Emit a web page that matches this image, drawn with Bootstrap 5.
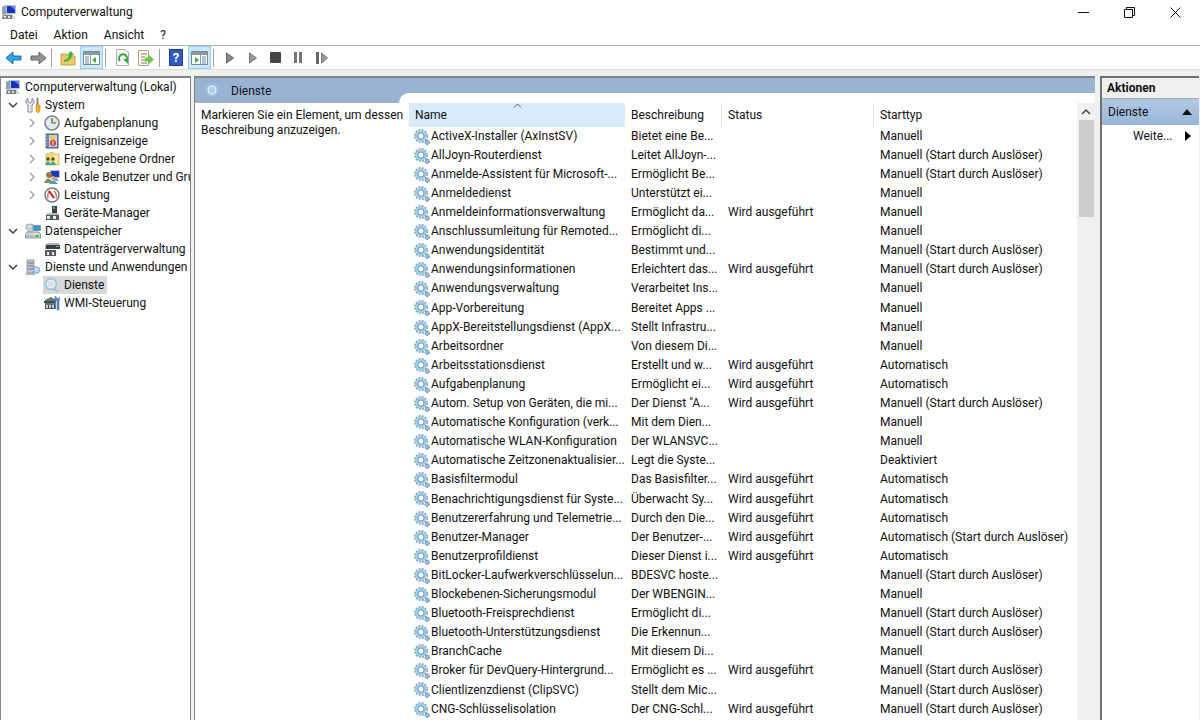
<!DOCTYPE html>
<html lang="de">
<head>
<meta charset="utf-8">
<meta name="viewport" content="width=device-width, initial-scale=1">
<title>Computerverwaltung</title>
<link href="https://cdn.jsdelivr.net/npm/bootstrap@5.3.0/dist/css/bootstrap.min.css" rel="stylesheet">
<style>
  body { font: 12px/18px Roboto, "Open Sans", sans-serif; color: #111; background: #f0f0f0; }
  svg { display: block; flex: none; }
  button { font: inherit; color: inherit; }
  .plain { border: 0; background: none; padding: 0; }
  .titlebar { height: 24px; padding: 0 2px 0 1px; }
  .winbtn { width: 46px; height: 24px; }
  .menubar { height: 21px; padding-left: 2px; border-bottom: 1px solid #b4b4b4; box-sizing: content-box; }
  .toolbar { height: 24px; border-bottom: 1px solid #dcdcdc; padding-left: 2px; gap: 1px; }
  .tool { width: 23px; height: 23px; display: flex; align-items: center; justify-content: center; }
  .tool.on { background: #cce8ff; border: 1px solid #99cdf5; }
  .rule { width: 1px; height: 18px; background: #a0a0a0; margin: 0 3px 0 1px; }
  .panes { padding-top: 6px; }
  .pane { background: #fff; border: solid #828282; border-width: 2px 1px 0; min-width: 0; overflow: hidden; }
  .tree-pane { width: 191px; margin-right: 3px; }
  .tree li { white-space: nowrap; height: 18px; display: flex; align-items: center; }
  .tree li > span { flex: none; }
  .tree .twist { width: 13px; margin-right: 6px; height: 18px; display: flex; align-items: center; justify-content: center; }
  .tree .lvl1 { padding-left: 5px; }
  .tree .lvl2 { padding-left: 24px; }
  .tree svg.ico { margin-right: 4px; }
  .tree .chosen { background: #d9d9d9; padding-right: 3px; margin-left: -1px; padding-left: 1px; }
  .heading { background: #9ab3d3; height: 25px; }
  .heading-name { width: 204px; padding-left: 10px; gap: 10px; }
  .heading-cap { height: 10px; border-top-left-radius: 10px; background: #fff; }
  .hint { width: 214px; padding: 5px 0 0 6px; line-height: 15px; white-space: nowrap; }
  .svc { table-layout: fixed; width: 100%; border-collapse: separate; border-spacing: 0; }
  .svc th { height: 24px; padding: 0 0 0 6px; font-weight: 400; position: relative; border-right: 1px solid #e5e5e5; }
  .svc th:first-child { background: #d9ebf9; border-right: 0; }
  .svc th:last-child { border-right: 0; }
  .svc td { height: 19px; line-height: 19px; padding: 0 0 0 6px; white-space: nowrap; }
  .svc tr:nth-child(10n) td { height: 20px; }
  .svc td:first-child { padding-left: 4px; }
  .svc .sort { position: absolute; top: 0; left: 50%; margin-left: -4px; }
  .scrollbar { width: 18px; background: #f0f0f0; }
  .scrollbar button { width: 18px; height: 17px; display: flex; align-items: center; justify-content: center; }
  .thumb { height: 97px; margin: 0 1px 0 2px; background: #cdcdcd; }
  .action-pane { width: 99px; margin: 0 1px 0 5px; border-right: 0; border-left-width: 2px; border-color: #707070; }
  .action-title { height: 21px; background: #f0f0f0; border-bottom: 1px solid #a8a8a8; padding-left: 5px; font-size: 12px; line-height: 20px; }
  .action-group { height: 26px; background: linear-gradient(#b3c9e5, #98b4d6); padding: 0 7px 0 6px; }
  .action-more { height: 22px; padding: 0 8px 0 31px; }
</style>
</head>
<body class="vh-100 d-flex flex-column overflow-hidden">

<svg width="0" height="0" class="position-absolute" aria-hidden="true">
  <defs>
    <symbol id="computer" viewBox="0 0 16 16">
      <path d="M1 3l4-2v9l-4 1z" fill="#8fa0b4"/><path d="M5 1h10v9H5z" fill="#b9c6d6"/><path d="M6 2h8v7H6z" fill="#1732b8"/><path d="M9 2h5v4z" fill="#5b86ec"/>
      <path d="M9 10h3v2H9z" fill="#8190a4"/><path d="M2 10h10l3 5H1z" fill="#d6d9d4"/><path d="M2 11h9v4H1z" fill="#777d80"/><path d="M3 12h2v2H3zM7 12h2v2H7z" fill="#e3e6e6"/>
    </symbol>
    <symbol id="tools" viewBox="0 0 16 16">
      <path d="M3 1v4l2 1 2-1V1l2 2v3L7 8v7H3V8L1 6V3z" fill="#e9edf0" stroke="#83898f"/><path d="M12 1h1v7h-1z" fill="#777" stroke="#888"/><path d="M11 8h4v6l-2 2-2-2z" fill="#f1b72c" stroke="#c58a15" stroke-width=".7"/>
    </symbol>
    <symbol id="clock" viewBox="0 0 16 16">
      <circle cx="8" cy="8" r="7" fill="#e4e9ee" stroke="#7e858c" stroke-width="1.6"/><path d="M8 8V3a5 5 0 0 1 5 5z" fill="#f3dfaa"/><path d="M8 3v5h4" fill="none" stroke="#4b5c70" stroke-width="1.2"/>
    </symbol>
    <symbol id="log" viewBox="0 0 16 16">
      <path d="M2 1h12v14H2z" fill="#7289ad" stroke="#455a7d"/><path d="M5 2h8v12H5z" fill="#c7d3e4"/><circle cx="9" cy="5" r="2.4" fill="#f2cd43"/><circle cx="9" cy="10" r="3" fill="#d83d36"/><path d="M8.5 8h1v4h-1z" fill="#fff"/><path d="M1 3h2M1 6h2M1 9h2M1 12h2" stroke="#ddd"/>
    </symbol>
    <symbol id="shared" viewBox="0 0 16 16">
      <path d="M2 3l7-2 1 2h5v11H2z" fill="#f3d77e" stroke="#cda849" stroke-width=".7"/><path d="M10 4h4v9h-4z" fill="#f9e8ad"/><circle cx="4" cy="8" r="1.7" fill="#59432a"/><circle cx="9" cy="8" r="1.7" fill="#59432a"/><path d="M1 14q3-7 6 0M6 14q3-7 6 0" fill="#31aaa0"/>
    </symbol>
    <symbol id="users" viewBox="0 0 16 16">
      <path d="M6 1h10v8H6z" fill="#b8c5d5"/><path d="M7 2h8v6H7z" fill="#1a39ba"/><path d="M9 9h4l2 3H9z" fill="#9ba6b3"/><circle cx="5" cy="6" r="3" fill="#a57844"/><path d="M0 14q4-9 9 0z" fill="#6a9b70"/><circle cx="9" cy="9" r="2" fill="#d3ac7d"/><path d="M5 15q4-7 9 0z" fill="#5e95c1"/>
    </symbol>
    <symbol id="perf" viewBox="0 0 16 16">
      <circle cx="8" cy="8" r="7" fill="#fff" stroke="#7d7d7d" stroke-width="1.6"/><path d="M4 11q-1-5 2-7M10 4q3 2 2 7" fill="none" stroke="#cc5e5b" stroke-width="1.3"/><path d="M5 4l5 7" stroke="#c4161c" stroke-width="2"/>
    </symbol>
    <symbol id="device" viewBox="0 0 16 16">
      <path d="M8 1h5v7H8z" fill="#3a3f40"/><path d="M9 2h2v2H9z" fill="#5fbd65"/><path d="M3 8h11l1 3H2z" fill="#b5b8b8"/><path d="M2 10h13v5H2z" fill="#53585b"/><path d="M3 11h3v3H3zM9 11h3v3H9z" fill="#e9eded"/>
    </symbol>
    <symbol id="storage" viewBox="0 0 16 16">
      <path d="M1 2q4-2 8 0v4H1z" fill="#d5dadd" stroke="#868e92" stroke-width=".7"/><path d="M8 2.500h7.500v5H8z" fill="#25a0d8" stroke="#87939d"/><path d="M2 6h6v4H2z" fill="#c0d1dc"/><path d="M2 9h12l1.500 2v4H.5v-4z" fill="#d4d9db" stroke="#7e878b" stroke-width=".8"/><path d="M10 12h4v2h-4z" fill="#52b84f"/><path d="M1 13h8" stroke="#8c9599"/>
    </symbol>
    <symbol id="disk" viewBox="0 0 16 16">
      <path d="M3 2h12l1 3v3H1V5z" fill="#b2b7b9"/><path d="M2 4h14v4H2z" fill="#3a4041"/><path d="M12 5h3v1h-3z" fill="#65c669"/><path d="M1 9h11v6H1z" fill="#565c60"/><path d="M3 11h2v3H3zM8 11h2v3H8z" fill="#edf0f0"/>
    </symbol>
    <symbol id="server" viewBox="0 0 16 16">
      <path d="M2 1h7v13H2z" fill="#bdc8d0" stroke="#7d8a95" stroke-width=".8"/><path d="M3 4h5M3 7h5M3 10h5" stroke="#66747f"/><circle cx="11.500" cy="11" r="3" fill="#c7dff1" stroke="#6e9cbf" stroke-width="1.6" stroke-dasharray="1.5 .8"/><path d="M1 14h9v2H1z" fill="#a9b7c1"/>
    </symbol>
    <symbol id="gear" viewBox="0 0 16 16">
      <circle cx="7" cy="7" r="6" fill="none" stroke="#7da7c7" stroke-width="2" stroke-dasharray="1.9 1.240"/><circle cx="7" cy="7" r="4.400" fill="#fff" stroke="#a6cde8" stroke-width="2.400"/><circle cx="7" cy="7" r="3.100" fill="#f5fafd" stroke="#5886aa" stroke-width=".9"/><circle cx="13.200" cy="13.200" r="1.700" fill="#d4e7f4" stroke="#5f8fb4" stroke-width="2" stroke-dasharray="1.200 .6"/>
    </symbol>
    <symbol id="gear-soft" viewBox="0 0 16 16">
      <circle cx="7" cy="7" r="5.200" fill="#d8e8f4" fill-opacity=".5" stroke="#9cc6e2" stroke-width="2.200"/><circle cx="7" cy="7" r="4" fill="none" stroke="#eaf5fb"/><path d="M10.500 12.500l4 2" stroke="#84afd0" stroke-width="2.400" stroke-dasharray="1.500 1"/>
    </symbol>
    <symbol id="wmi" viewBox="0 0 16 16">
      <path d="M1 5l6-3 5 3v9H1z" fill="#68757e"/><path d="M0 6h11v2H0zM1 10h10v4H1z" fill="#3f4c57"/><path d="M2 10h2v3H2zM5 10h2v3H5zM8 10h2v3H8z" fill="#c9d2d8"/><path d="M11 1v4l2 1v9h2V6l1-4-2 2z" fill="#5d8fc5" stroke="#39668f" stroke-width=".5"/>
    </symbol>
    <symbol id="down" viewBox="0 0 10 10"><path d="M1 3l4 4 4-4" fill="none" stroke="#404040" stroke-width="1.500"/></symbol>
    <symbol id="right" viewBox="0 0 10 10"><path d="M3 1l4 4-4 4" fill="none" stroke="#a0a0a0" stroke-width="1.400"/></symbol>
  </defs>
</svg>

<header class="bg-white">
  <div class="titlebar d-flex align-items-center">
    <svg width="16" height="16"><use href="#computer"/></svg>
    <span class="ms-1 flex-grow-1">Computerverwaltung</span>
    <button class="winbtn plain d-flex align-items-center justify-content-center" aria-label="Minimieren"><svg width="11" height="11"><path d="M0 5.500h11" stroke="#111"/></svg></button>
    <button class="winbtn plain d-flex align-items-center justify-content-center" aria-label="Verkleinern"><svg width="11" height="11"><path d="M.5 2.500h8v8h-8zM2.500 2.500v-2h8v8h-2" fill="none" stroke="#111"/></svg></button>
    <button class="winbtn plain d-flex align-items-center justify-content-center" aria-label="Schließen"><svg width="11" height="11"><path d="M.5.5l10 10M10.500.5l-10 10" stroke="#111"/></svg></button>
  </div>
  <nav class="menubar d-flex align-items-center" aria-label="Menü">
    <button class="plain px-2">Datei</button>
    <button class="plain px-2">Aktion</button>
    <button class="plain px-2">Ansicht</button>
    <button class="plain px-2">?</button>
  </nav>
  <div class="toolbar d-flex align-items-center" role="toolbar" aria-label="Symbolleiste">
    <button class="tool plain" aria-label="Zurück"><svg width="18" height="16"><path d="M1 8l7-6v4h8v4H8v4z" fill="#2fa3e3" stroke="#1b74b0"/></svg></button>
    <button class="tool plain" aria-label="Vorwärts"><svg width="18" height="16"><path d="M17 8l-7-6v4H2v4h8v4z" fill="#949494" stroke="#666"/></svg></button>
    <span class="rule"></span>
    <button class="tool plain" aria-label="Eine Ebene nach oben"><svg width="16" height="16"><path d="M1 4h5l2 2h7v9H1z" fill="#edc86c" stroke="#c99f42"/><path d="M4 10q5-1 5-5H7l4-4 3 4h-2q0 6-8 7z" fill="#45b637"/></svg></button>
    <button class="tool on p-0" aria-label="Konsolenstruktur"><svg width="17" height="16"><path d="M.5 1.500h16v13H.5z" fill="#fff" stroke="#7c8792"/><path d="M1 2h15v3H1z" fill="#8b98a5"/><path d="M2 7h4M2 9h4M2 11h4M2 13h4" stroke="#6a88aa"/><path d="M7.500 5v9" stroke="#8b98a5"/><path d="M13 7v6l-4-3z" fill="#3cae36"/></svg></button>
    <span class="rule"></span>
    <button class="tool plain" aria-label="Aktualisieren"><svg width="16" height="17"><path d="M2.500.5h9l3 3v13h-12z" fill="#fff" stroke="#aaa"/><path d="M6 12a4 4 0 1 1 6 0" fill="none" stroke="#36aa31" stroke-width="2"/><path d="M9 10h5v5z" fill="#36aa31"/></svg></button>
    <button class="tool plain" aria-label="Liste exportieren"><svg width="17" height="16"><path d="M1.500.5h10v15h-10z" fill="#fffced" stroke="#aaa487"/><path d="M4 4h6M4 7h4M4 10h4M4 13h6" stroke="#777"/><path d="M8 7.500h4V5l5 4.500-5 4.500v-2.500H8z" fill="#60c93d"/></svg></button>
    <span class="rule"></span>
    <button class="tool plain" aria-label="Hilfe"><svg width="14" height="17"><path d="M.5.5h13v16H.5z" fill="#3359ba" stroke="#1f3c8d"/><text x="7" y="13" fill="#fff" font-size="13" font-weight="700" text-anchor="middle">?</text></svg></button>
    <button class="tool on p-0" aria-label="Aktionsbereich"><svg width="17" height="16"><path d="M.5 1.500h16v13H.5z" fill="#fff" stroke="#7c8792"/><path d="M1 2h15v3H1z" fill="#8b98a5"/><path d="M11 7h4M11 9h4M11 11h4M11 13h4" stroke="#6a88aa"/><path d="M9.500 5v9" stroke="#8b98a5"/><path d="M4 7v6l4-3z" fill="#3cae36"/></svg></button>
    <span class="rule"></span>
    <div class="d-flex">
      <button class="tool plain" aria-label="Starten"><svg width="8" height="12"><path d="M.5 1l7 5-7 5z" fill="#888" stroke="#666"/></svg></button>
      <button class="tool plain" aria-label="Fortsetzen"><svg width="8" height="12"><path d="M.5 1l7 5-7 5z" fill="#999" stroke="#777"/></svg></button>
      <button class="tool plain" aria-label="Beenden"><svg width="11" height="11"><rect width="11" height="11" rx="1" fill="#444"/></svg></button>
      <button class="tool plain" aria-label="Anhalten"><svg width="9" height="11"><path d="M0 0h3v11H0zM5 0h3v11H5z" fill="#777"/></svg></button>
      <button class="tool plain" aria-label="Neu starten"><svg width="12" height="12"><path d="M0 0h3v12H0z" fill="#666"/><path d="M5.500 1l6 5-6 5z" fill="#999" stroke="#777"/></svg></button>
    </div>
  </div>
</header>

<main class="panes d-flex flex-grow-1 overflow-hidden">
  <nav class="pane tree-pane flex-shrink-0" aria-label="Konsolenstruktur">
    <ul class="tree list-unstyled m-0" id="tree"></ul>
  </nav>

  <section class="pane border-end-0 flex-grow-1 d-flex flex-column">
    <div class="heading d-flex flex-shrink-0">
      <div class="heading-name d-flex align-items-center flex-shrink-0"><svg width="16" height="16"><use href="#gear-soft"/></svg>Dienste</div>
      <div class="heading-cap flex-grow-1 align-self-end"></div>
    </div>
    <div class="d-flex flex-grow-1 overflow-hidden">
      <p class="hint m-0 flex-shrink-0">Markieren Sie ein Element, um dessen<br>Beschreibung anzuzeigen.</p>
      <div class="flex-grow-1 overflow-hidden">
        <table class="svc">
          <colgroup><col style="width:216px"><col style="width:97px"><col style="width:152px"><col></colgroup>
          <thead>
            <tr>
              <th scope="col">Name<svg class="sort" width="9" height="5"><path d="M1 4.500l3.500-3.500L8 4.500" fill="none" stroke="#555"/></svg></th>
              <th scope="col">Beschreibung</th>
              <th scope="col">Status</th>
              <th scope="col">Starttyp</th>
            </tr>
          </thead>
          <tbody id="services"></tbody>
        </table>
      </div>
      <div class="scrollbar flex-shrink-0">
        <button class="plain" aria-label="Nach oben"><svg width="10" height="8"><path d="M1 6l4-4 4 4" fill="none" stroke="#444" stroke-width="1.500"/></svg></button>
        <div class="thumb"></div>
      </div>
    </div>
  </section>

  <aside class="pane action-pane flex-shrink-0">
    <h2 class="action-title m-0 fw-bold">Aktionen</h2>
    <button class="action-group border-0 w-100 d-flex align-items-center justify-content-between">Dienste<svg width="10" height="6"><path d="M5 0l5 6H0z" fill="#111"/></svg></button>
    <button class="action-more plain w-100 d-flex align-items-center justify-content-between">Weite...<svg width="6" height="10"><path d="M0 0l6 5-6 5z" fill="#000"/></svg></button>
  </aside>
</main>

<script>
  // level, icon, label, state ("down" = open, "right" = closed)
  const nodes = [
    [0, "computer", "Computerverwaltung (Lokal)", ""],
    [1, "tools", "System", "down"],
    [2, "clock", "Aufgabenplanung", "right"],
    [2, "log", "Ereignisanzeige", "right"],
    [2, "shared", "Freigegebene Ordner", "right"],
    [2, "users", "Lokale Benutzer und Gruppen", "right"],
    [2, "perf", "Leistung", "right"],
    [2, "device", "Geräte-Manager", ""],
    [1, "storage", "Datenspeicher", "down"],
    [2, "disk", "Datenträgerverwaltung", ""],
    [1, "server", "Dienste und Anwendungen", "down"],
    [2, "gear-soft", "Dienste", "", true],
    [2, "wmi", "WMI-Steuerung", ""]
  ];
  document.getElementById("tree").innerHTML = nodes.map(([lvl, icon, label, state, chosen]) => {
    const twist = lvl ? `<span class="twist">${state ? `<svg width="10" height="10"><use href="#${state}"/></svg>` : ""}</span>` : "";
    return `<li class="${lvl ? "lvl" + lvl : "ps-1"}">${twist}<span class="d-flex align-items-center ${chosen ? "chosen" : ""}"><svg class="ico" width="16" height="16"><use href="#${icon}"/></svg>${label}</span></li>`;
  }).join("");

  const R = "Wird ausgeführt", M = "Manuell", T = "Manuell (Start durch Auslöser)", A = "Automatisch";
  const services = [
    ["ActiveX-Installer (AxInstSV)", "Bietet eine Be...", "", M],
    ["AllJoyn-Routerdienst", "Leitet AllJoyn-...", "", T],
    ["Anmelde-Assistent für Microsoft-...", "Ermöglicht Be...", "", T],
    ["Anmeldedienst", "Unterstützt ei...", "", M],
    ["Anmeldeinformationsverwaltung", "Ermöglicht da...", R, M],
    ["Anschlussumleitung für Remoted...", "Ermöglicht di...", "", M],
    ["Anwendungsidentität", "Bestimmt und...", "", T],
    ["Anwendungsinformationen", "Erleichtert das...", R, T],
    ["Anwendungsverwaltung", "Verarbeitet Ins...", "", M],
    ["App-Vorbereitung", "Bereitet Apps ...", "", M],
    ["AppX-Bereitstellungsdienst (AppX...", "Stellt Infrastru...", "", M],
    ["Arbeitsordner", "Von diesem Di...", "", M],
    ["Arbeitsstationsdienst", "Erstellt und w...", R, A],
    ["Aufgabenplanung", "Ermöglicht ei...", R, A],
    ["Autom. Setup von Geräten, die mi...", "Der Dienst \"A...", R, T],
    ["Automatische Konfiguration (verk...", "Mit dem Dien...", "", M],
    ["Automatische WLAN-Konfiguration", "Der WLANSVC...", "", M],
    ["Automatische Zeitzonenaktualisier...", "Legt die Syste...", "", "Deaktiviert"],
    ["Basisfiltermodul", "Das Basisfilter...", R, A],
    ["Benachrichtigungsdienst für Syste...", "Überwacht Sy...", R, A],
    ["Benutzererfahrung und Telemetrie...", "Durch den Die...", R, A],
    ["Benutzer-Manager", "Der Benutzer-...", R, "Automatisch (Start durch Auslöser)"],
    ["Benutzerprofildienst", "Dieser Dienst i...", R, A],
    ["BitLocker-Laufwerkverschlüsselun...", "BDESVC hoste...", "", T],
    ["Blockebenen-Sicherungsmodul", "Der WBENGIN...", "", M],
    ["Bluetooth-Freisprechdienst", "Ermöglicht di...", "", T],
    ["Bluetooth-Unterstützungsdienst", "Die Erkennun...", "", T],
    ["BranchCache", "Mit diesem Di...", "", M],
    ["Broker für DevQuery-Hintergrund...", "Ermöglicht es ...", R, T],
    ["Clientlizenzdienst (ClipSVC)", "Stellt dem Mic...", "", T],
    ["CNG-Schlüsselisolation", "Der CNG-Schl...", R, T],
    ["", "", "", ""]
  ];
  document.getElementById("services").innerHTML = services.map(([name, text, status, start]) =>
    `<tr><td><span class="d-flex align-items-center"><svg width="18" height="18" viewBox="-1 -1 18 18"><use href="#gear" width="16" height="16"/></svg>${name}</span></td><td>${text}</td><td>${status}</td><td>${start}</td></tr>`
  ).join("");
</script>
<script src="https://cdn.jsdelivr.net/npm/bootstrap@5.3.0/dist/js/bootstrap.bundle.min.js"></script>
</body>
</html>
